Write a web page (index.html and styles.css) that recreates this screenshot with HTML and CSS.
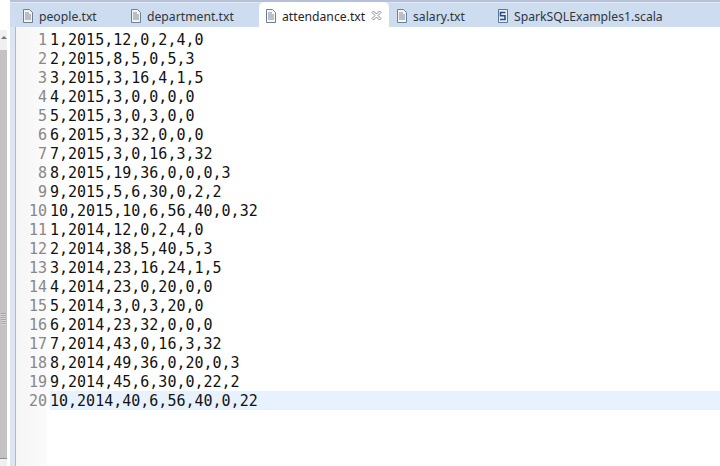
FILE: index.html
```html
<!DOCTYPE html>
<html>
<head>
<meta charset="utf-8">
<link rel="stylesheet" href="styles.css">
</head>
<body>
<div class="app">
  <div class="side"><div class="scroll"><div class="arrow"></div><div class="thumb"></div></div></div>
  <div class="main">
    <div class="tabs">
      <div class="tab t1"><svg class="ico" viewBox="0 0 12 14"><path d="M1.5.5h6l3 3v10h-9z" fill="#f4f4ee" stroke="#6d7f94"/><path d="M3 4h4M3 6h6M3 8h6M3 10h6" stroke="#7d8aa0"/></svg><span>people.txt</span></div>
      <div class="tab t2"><svg class="ico" viewBox="0 0 12 14"><path d="M1.5.5h6l3 3v10h-9z" fill="#f4f4ee" stroke="#6d7f94"/><path d="M3 4h4M3 6h6M3 8h6M3 10h6" stroke="#7d8aa0"/></svg><span>department.txt</span></div>
      <div class="tab active"><svg class="ico" viewBox="0 0 12 14"><path d="M1.5.5h6l3 3v10h-9z" fill="#f8f8f4" stroke="#6d7f94"/><path d="M3 4h4M3 6h6M3 8h6M3 10h6" stroke="#7d8aa0"/></svg><span>attendance.txt</span><svg class="close" viewBox="0 0 11 11"><path d="M1 2.5 2.5 1 5.5 4 8.500 1 10 2.500 7 5.500 10 8.500 8.500 10 5.500 7 2.500 10 1 8.500 4 5.500z" fill="#fff" stroke="#858b92"/></svg></div>
      <div class="tab t4"><svg class="ico" viewBox="0 0 12 14"><path d="M1.5.5h6l3 3v10h-9z" fill="#f4f4ee" stroke="#6d7f94"/><path d="M3 4h4M3 6h6M3 8h6M3 10h6" stroke="#7d8aa0"/></svg><span>salary.txt</span></div>
      <div class="tab t5"><svg class="ico" viewBox="0 0 12 14"><path d="M1.500.5h9v13h-9z" fill="#e8eef4" stroke="#5f7590"/><path d="M8.500 3.500h-5v3.200h4.500v3.800h-5" fill="none" stroke="#24508a" stroke-width="1.600"/></svg><span>SparkSQLExamples1.scala</span></div>
    </div>
    <div class="editor">
      <div class="ruler"></div>
      <div class="code">
        <div class="row"><span class="n">1</span><span class="c">1,2015,12,0,2,4,0</span></div>
        <div class="row"><span class="n">2</span><span class="c">2,2015,8,5,0,5,3</span></div>
        <div class="row"><span class="n">3</span><span class="c">3,2015,3,16,4,1,5</span></div>
        <div class="row"><span class="n">4</span><span class="c">4,2015,3,0,0,0,0</span></div>
        <div class="row"><span class="n">5</span><span class="c">5,2015,3,0,3,0,0</span></div>
        <div class="row"><span class="n">6</span><span class="c">6,2015,3,32,0,0,0</span></div>
        <div class="row"><span class="n">7</span><span class="c">7,2015,3,0,16,3,32</span></div>
        <div class="row"><span class="n">8</span><span class="c">8,2015,19,36,0,0,0,3</span></div>
        <div class="row"><span class="n">9</span><span class="c">9,2015,5,6,30,0,2,2</span></div>
        <div class="row"><span class="n">10</span><span class="c">10,2015,10,6,56,40,0,32</span></div>
        <div class="row"><span class="n">11</span><span class="c">1,2014,12,0,2,4,0</span></div>
        <div class="row"><span class="n">12</span><span class="c">2,2014,38,5,40,5,3</span></div>
        <div class="row"><span class="n">13</span><span class="c">3,2014,23,16,24,1,5</span></div>
        <div class="row"><span class="n">14</span><span class="c">4,2014,23,0,20,0,0</span></div>
        <div class="row"><span class="n">15</span><span class="c">5,2014,3,0,3,20,0</span></div>
        <div class="row"><span class="n">16</span><span class="c">6,2014,23,32,0,0,0</span></div>
        <div class="row"><span class="n">17</span><span class="c">7,2014,43,0,16,3,32</span></div>
        <div class="row"><span class="n">18</span><span class="c">8,2014,49,36,0,20,0,3</span></div>
        <div class="row"><span class="n">19</span><span class="c">9,2014,45,6,30,0,22,2</span></div>
        <div class="row cur"><span class="n">20</span><span class="c">10,2014,40,6,56,40,0,22</span></div>
      </div>
    </div>
  </div>
</div>
</body>
</html>
```
FILE: styles.css
```css
html, body { margin: 0; padding: 0; width: 720px; height: 466px; overflow: hidden; background: #fff; }
.app { display: flex; width: 720px; height: 466px; font-family: "DejaVu Sans Mono", monospace; }
.side { width: 10px; flex: none; background: #fff; padding-top: 30px; box-sizing: border-box; }
.scroll { width: 7px; height: 436px; background: #f0f0f0; padding-top: 6px; box-sizing: border-box; }
.arrow { width: 0; height: 0; margin: 0 0 11px 1px; border: 3px solid transparent; border-top: 0; border-bottom: 3px solid #777; }
.thumb { height: 408px; border-bottom: 1px solid #8f8f8f; background: linear-gradient(#c4c2c2, #c4c2c2) 0 0 / 100% 100%; position: relative; }
.thumb::after { content: ""; position: absolute; left: 1px; right: 1px; top: 263px; height: 12px; background: repeating-linear-gradient(#a8a8a8 0 1px, #d6d6d6 1px 2px); }
.main { flex: 1; min-width: 0; display: flex; flex-direction: column; }
.tabs { height: 27px; flex: none; display: flex; margin-left: 0; padding-left: 5px; background: #cddcee; border-top: 2px solid #b6c0d8; box-sizing: border-box; font: 12.2px "Noto Sans", sans-serif; color: #2f3640; box-shadow: inset 0 1px 0 #dfe8f3; }
.tab { display: flex; align-items: center; gap: 5px; height: 25px; padding-top: 2px; box-sizing: border-box; flex: none; }
.tab span { white-space: nowrap; margin-top: 2px; }
.ico { width: 12px; height: 14px; flex: none; }
.t1 { width: 108px; padding-left: 7px; }
.t2 { width: 136px; padding-left: 7px; }
.active { width: 130px; padding: 2px 7px 0 6px; background: #fff; border-radius: 5px 5px 0 0; color: #1f2328; }
.close { width: 11px; height: 11px; margin-left: auto; flex: none; }
.t4 { width: 101px; padding-left: 7px; }
.t5 { padding-left: 7px; }
.editor { flex: 1; display: flex; min-height: 0; background: #fff; border-left: 5px solid #dce6f2; position: relative; }
.ruler { width: 32px; flex: none; background: linear-gradient(90deg, #f5f5f5, #fbfbfb); border-left: 1px solid #a9bccf; box-sizing: border-box; margin-right: -32px; }
.code { flex: 1; padding-top: 3px; position: relative; }
.row { height: 19px; display: flex; font-size: 15px; line-height: 21px; color: #111; white-space: pre; }
.n { width: 32px; padding-right: 3px; box-sizing: content-box; text-align: right; color: #888; flex: none; }
.c { flex: 1; }
.cur .c { background: #e8f2fe; }
```
